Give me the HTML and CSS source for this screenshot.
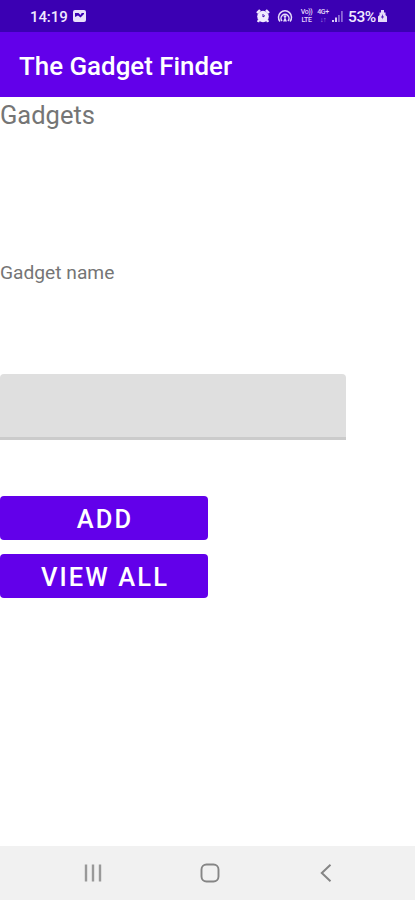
FILE: index.html
```html
<!DOCTYPE html>
<html lang="en">
<head>
  <meta charset="UTF-8">
  <meta name="viewport" content="width=device-width, initial-scale=1">
  <title>The Gadget Finder</title>
  <link rel="stylesheet" href="styles.css">
</head>
<body>

  <div class="status-bar">
    <span class="clock">14:19</span>
    <svg class="icon-photo" width="13" height="12" viewBox="0 0 13 12">
      <rect width="13" height="12" rx="2" fill="#e8e0fa"/>
      <path d="M2 3h9v1L7.500 7.500 5 5.500 2 7z" fill="#3b00b3"/>
      <path d="M5 2.500h4L7.500 5z" fill="#e8e0fa"/>
    </svg>
    <div class="status-right">
      <svg class="icon-alarm" width="14" height="14" viewBox="0 0 14 14">
        <path d="M1 4l3-3M13 4l-3-3M3 11l-1 2M11 11l1 2" stroke="#f0eaff" stroke-width="2.400"/>
        <circle cx="7" cy="7.500" r="5.800" fill="#f0eaff"/>
        <path d="M7 5v3l2-1.500" fill="none" stroke="#3b00b3" stroke-width="1"/>
      </svg>
      <svg class="icon-hotspot" width="16" height="14" viewBox="0 0 16 14" fill="none" stroke="#e4dafa" stroke-width="1.500">
        <path d="M3 12.500a6.500 6.500 0 1 1 10 0"/>
        <path d="M5 12a4 4 0 1 1 6 0"/>
        <path d="M8 8l-2 4.500h4z" fill="#e4dafa" stroke="none"/>
        <circle cx="8" cy="7.500" r="1.300" fill="#e4dafa" stroke="none"/>
      </svg>
      <span class="network volte"><span>Vo))</span><span>LTE</span></span>
      <span class="network data"><span>4G+</span><span class="arrows">↓↑</span></span>
      <svg class="icon-signal" width="11" height="11" viewBox="0 0 11 11">
        <path d="M0 11V9h2v2zM3 11V6.500h2V11z" fill="#d8ccf5"/>
        <path d="M6 11V4h1.800v7zM9 11V0h1.800v11z" fill="#8b68d6"/>
      </svg>
      <span class="battery-text">53%</span>
      <svg class="icon-battery" width="9" height="12" viewBox="0 0 9 12">
        <path d="M3 0h3v2.500h1.500V5L9 6.500V12H0V6.500L1.500 5V2.500H3z" fill="#e4dafa"/>
        <path d="M5 4L3 7.500h1.500L4 9.500 6 6.500H4.700z" fill="#3b00b3"/>
      </svg>
    </div>
  </div>

  <header class="app-bar">
    <h1>The Gadget Finder</h1>
  </header>

  <main class="content">
    <h2 class="heading">Gadgets</h2>
    <label class="field-label" for="gadget-name">Gadget name</label>
    <input class="field" id="gadget-name" type="text">
    <button class="button">ADD</button>
    <button class="button">VIEW ALL</button>
  </main>

  <nav class="nav-bar">
    <svg width="20" height="20" viewBox="0 0 20 20" fill="none" stroke="#999" stroke-width="2.400">
      <path d="M3 1.500v17M10 1.500v17M17 1.500v17"/>
    </svg>
    <svg width="20" height="20" viewBox="0 0 20 20" fill="none" stroke="#858585" stroke-width="1.900">
      <rect x="1.500" y="1.500" width="17" height="17" rx="5"/>
    </svg>
    <svg width="20" height="20" viewBox="0 0 20 20" fill="none" stroke="#858585" stroke-width="2">
      <path d="M14.500 1.800L5.800 10l8.700 8.200"/>
    </svg>
  </nav>

</body>
</html>
```

FILE: styles.css
```css
* {
  box-sizing: border-box;
}
body {
  margin: 0;
  height: 900px;
  display: flex;
  flex-direction: column;
  overflow: hidden;
  font-family: Roboto, sans-serif;
  background: #fff;
}
.status-bar {
  height: 32px;
  padding: 0 28px 0 30px;
  display: flex;
  align-items: center;
  background: #3b00b3;
  color: #f0eaff;
  font-size: 15px;
  font-weight: 500;
}
.clock {
  width: 38px;
  padding-top: 1px;
  letter-spacing: -0.1px;
}
.icon-photo {
  margin-left: 5px;
}
.status-right {
  margin-left: auto;
  display: flex;
  align-items: center;
}
.icon-alarm {
  margin-right: 1px;
}
.icon-hotspot {
  margin-left: 6px;
}
.network {
  display: flex;
  flex-direction: column;
  align-items: center;
  font-size: 7px;
  line-height: 8px;
  letter-spacing: -0.4px;
  color: #e4dafa;
}
.volte {
  width: 13px;
  margin-left: 7px;
}
.data {
  width: 12px;
  margin-left: 4px;
}
.arrows {
  color: #a78be0;
}
.icon-signal {
  margin-left: 3px;
}
.battery-text {
  width: 30px;
  margin-left: 5px;
  padding-top: 1px;
  font-size: 15.5px;
  letter-spacing: -0.4px;
}
.app-bar {
  height: 65px;
  padding: 3px 19px 0;
  display: flex;
  align-items: center;
  background: #6200ea;
  color: #fff;
}
.app-bar h1 {
  margin: 0;
  font-size: 25.9px;
  font-weight: 500;
}
.content {
  flex: 1;
  display: flex;
  flex-direction: column;
  align-items: flex-start;
  color: #757575;
}
.heading {
  margin: 3px 0 0;
  font-size: 25.5px;
  font-weight: 400;
  line-height: 31px;
}
.field-label {
  margin-top: 130px;
  font-size: 19.2px;
  line-height: 24px;
}
.field {
  width: 346px;
  height: 66px;
  margin: 89px 0 56px;
  padding: 0 16px;
  border: 0;
  border-bottom: 3px solid #cbcbcb;
  border-radius: 4px 4px 0 0;
  background: #dfdfdf;
  font: inherit;
  outline: none;
}
.button {
  width: 208px;
  height: 44px;
  margin: 0 0 14px;
  padding: 2px 0 0 2px;
  border: 0;
  border-radius: 4px;
  background: #6200ea;
  color: #fff;
  font-family: inherit;
  font-size: 25.5px;
  font-weight: 500;
  letter-spacing: 2.1px;
}
.nav-bar {
  height: 54px;
  padding: 0 79px 0 83px;
  display: flex;
  align-items: center;
  justify-content: space-between;
  background: #f1f1f1;
}
```
